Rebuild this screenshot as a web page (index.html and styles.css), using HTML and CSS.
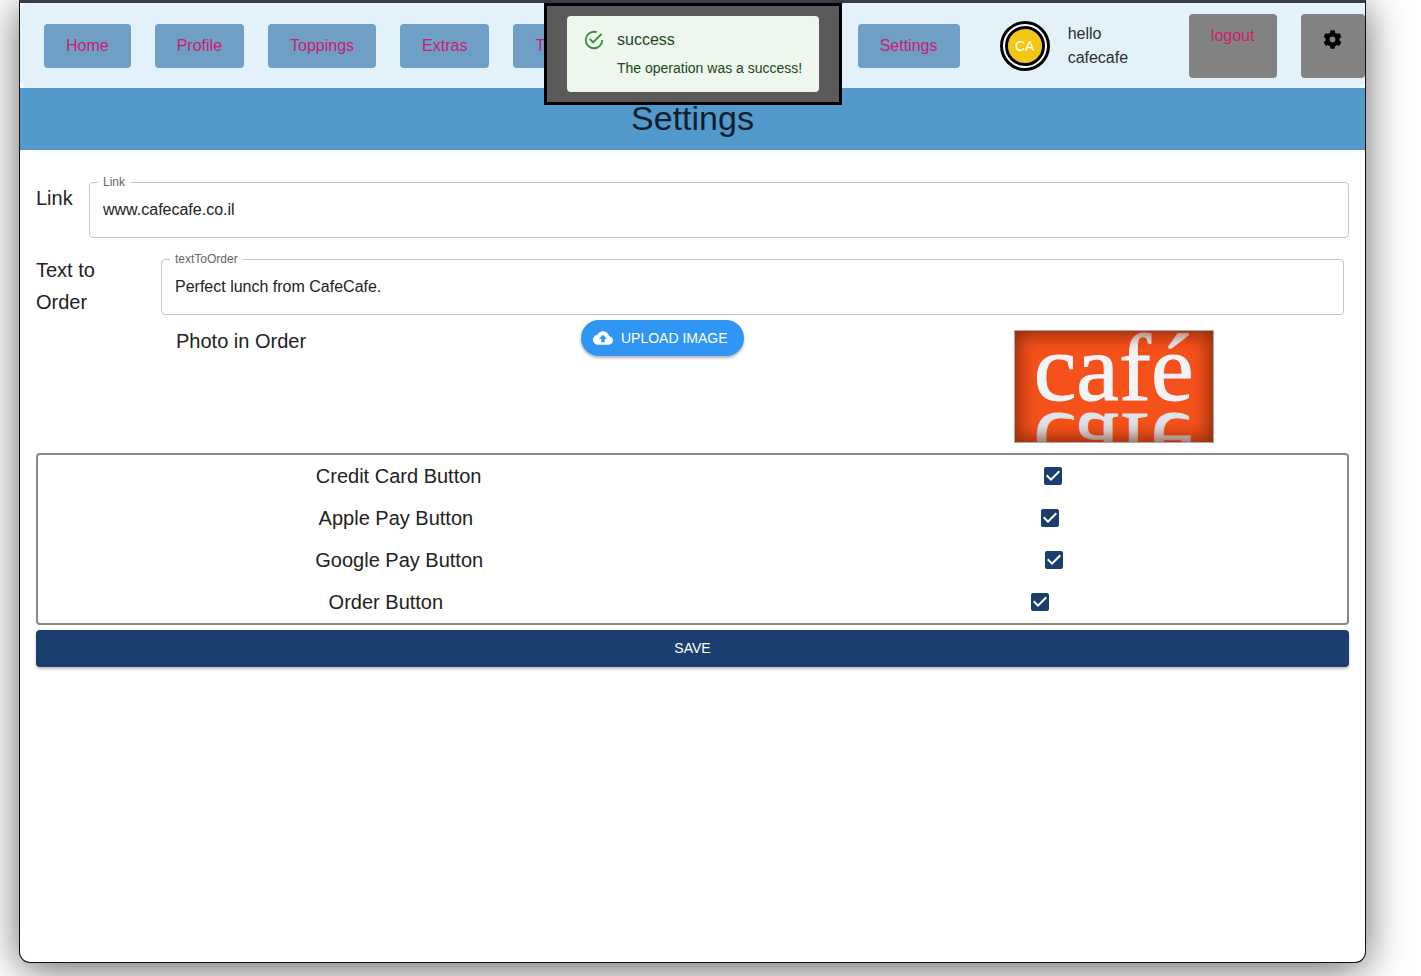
FILE: index.html
```html
<!DOCTYPE HTML>
<html>

<head>
  <meta charset="utf-8">
  <title>Settings</title>
  <link rel="stylesheet" href="styles.css">
</head>

<body>
  <div class="window">
    <nav class="nav">
      <a class="nav-btn" href="#">Home</a>
      <a class="nav-btn" href="#">Profile</a>
      <a class="nav-btn" href="#">Toppings</a>
      <a class="nav-btn" href="#">Extras</a>
      <a class="nav-btn" href="#">Tables</a>
      <a class="nav-btn" href="#">Orders</a>
      <a class="nav-btn" href="#">Menu</a>
      <a class="nav-btn nav-settings" href="#">Settings</a>
      <div class="avatar">
        <div class="avatar-in">CA</div>
      </div>
      <div class="hello">hello<br>cafecafe</div>
      <a class="grey-btn logout" href="#">logout</a>
      <a class="grey-btn gear" href="#">
        <svg width="19" height="19" viewBox="0 0 512 512">
          <path fill-rule="evenodd" d="M487 316l-42-25c4-23 4-47 0-70l42-25c5-3 7-9 6-14-11-35-30-67-54-93-4-4-10-5-15-2l-42 24c-18-15-38-27-61-35V28c0-6-4-10-9-12-36-8-73-8-108 0-6 2-10 6-10 12v48c-22 8-43 20-61 35L91 87c-5-3-11-2-15 2-24 26-43 58-54 93-1 5 1 11 6 14l42 25c-4 23-4 47 0 70l-42 25c-5 3-7 9-6 14 11 35 30 67 54 93 4 4 10 5 15 2l42-24c18 15 38 27 61 35v48c0 6 4 10 10 12 35 8 72 8 108 0 5-2 9-6 9-12v-48c23-8 43-20 61-35l42 24c5 3 11 2 15-2 24-26 43-58 54-93 1-5-1-11-6-14zM256 336c-44 0-80-36-80-80s36-80 80-80 80 36 80 80-36 80-80 80z" />
        </svg>
      </a>
    </nav>

    <div class="toast">
      <div class="alert">
        <svg class="alert-icon" width="22" height="22" viewBox="0 0 24 24">
          <path d="M20 12a8 8 0 0 1-8 8 8 8 0 0 1-8-8 8 8 0 0 1 8-8c.76 0 1.5.11 2.2.31l1.57-1.57A9.8 9.8 0 0 0 12 2 10 10 0 0 0 2 12a10 10 0 0 0 10 10 10 10 0 0 0 10-10M7.91 10.08 6.5 11.5 11 16 21 6l-1.41-1.42L11 13.17l-3.09-3.09z" />
        </svg>
        <div class="alert-text">
          <div class="alert-title">success</div>
          <div class="alert-msg">The operation was a success!</div>
        </div>
      </div>
    </div>

    <h1 class="title">Settings</h1>

    <div class="content">
      <div class="row row-link">
        <div class="row-label">Link</div>
        <fieldset class="field">
          <legend>Link</legend>
          <input class="field-input" type="text" value="www.cafecafe.co.il">
        </fieldset>
      </div>

      <div class="row row-text">
        <div class="row-label">Text to Order</div>
        <fieldset class="field">
          <legend>textToOrder</legend>
          <input class="field-input" type="text" value="Perfect lunch from CafeCafe.">
        </fieldset>
      </div>

      <div class="photo">
        <div class="photo-label">Photo in Order</div>
        <button class="upload" type="button">
          <svg width="20" height="20" viewBox="0 0 24 24">
            <path d="M19.35 10.04C18.67 6.59 15.64 4 12 4 9.11 4 6.6 5.64 5.35 8.04 2.34 8.36 0 10.91 0 14c0 3.31 2.69 6 6 6h13c2.76 0 5-2.24 5-5 0-2.64-2.05-4.78-4.65-4.96zM14 13v4h-4v-4H7l5-5 5 5h-3z" />
          </svg>
          Upload image
        </button>
        <div class="cafe">
          <div class="cafe-word">café</div>
          <div class="cafe-word cafe-flip">café</div>
        </div>
      </div>

      <div class="checks">
        <div class="check-row">
          <span>Credit Card Button</span>
          <span class="check"><svg width="24" height="24" viewBox="0 0 24 24"><path d="M19 3H5c-1.11 0-2 .9-2 2v14c0 1.1.89 2 2 2h14c1.11 0 2-.9 2-2V5c0-1.1-.89-2-2-2zm-9 14l-5-5 1.41-1.41L10 14.17l7.59-7.59L19 8l-9 9z" /></svg></span>
        </div>
        <div class="check-row">
          <span>Apple Pay Button</span>
          <span class="check"><svg width="24" height="24" viewBox="0 0 24 24"><path d="M19 3H5c-1.11 0-2 .9-2 2v14c0 1.1.89 2 2 2h14c1.11 0 2-.9 2-2V5c0-1.1-.89-2-2-2zm-9 14l-5-5 1.41-1.41L10 14.17l7.59-7.59L19 8l-9 9z" /></svg></span>
        </div>
        <div class="check-row">
          <span>Google Pay Button</span>
          <span class="check"><svg width="24" height="24" viewBox="0 0 24 24"><path d="M19 3H5c-1.11 0-2 .9-2 2v14c0 1.1.89 2 2 2h14c1.11 0 2-.9 2-2V5c0-1.1-.89-2-2-2zm-9 14l-5-5 1.41-1.41L10 14.17l7.59-7.59L19 8l-9 9z" /></svg></span>
        </div>
        <div class="check-row">
          <span>Order Button</span>
          <span class="check"><svg width="24" height="24" viewBox="0 0 24 24"><path d="M19 3H5c-1.11 0-2 .9-2 2v14c0 1.1.89 2 2 2h14c1.11 0 2-.9 2-2V5c0-1.1-.89-2-2-2zm-9 14l-5-5 1.41-1.41L10 14.17l7.59-7.59L19 8l-9 9z" /></svg></span>
        </div>
      </div>

      <button class="save" type="button">Save</button>
    </div>
  </div>
</body>

</html>
```

FILE: styles.css
```css
* {
  margin: 0;
  padding: 0;
  box-sizing: border-box;
}

html,
body {
  height: 976px;
  overflow: hidden;
}

body {
  background: #fff;
  font-family: "Liberation Sans", Arial, sans-serif;
  color: #222;
}

.window {
  position: relative;
  width: 1347px;
  height: 963px;
  margin-left: 19px;
  background: #fff;
  border: 1px solid #111;
  border-top: 3px solid #3a3c48;
  border-radius: 0 0 11px 11px;
  box-shadow: 0 6px 40px rgba(0, 0, 0, 0.6);
  overflow: hidden;
}

/* top bar */
.nav {
  display: flex;
  align-items: flex-start;
  height: 85px;
  background: #e3f1fa;
  border-radius: 8px;
}

.nav-btn {
  height: 44px;
  margin: 21px 0 0 24px;
  padding: 0 22px;
  line-height: 44px;
  font-size: 16px;
  color: #c9206e;
  background: #6f9fc4;
  border-radius: 4px;
  text-decoration: none;
}

.nav-settings {
  min-width: 102px;
  margin-left: 29px;
}

.avatar {
  width: 50px;
  height: 50px;
  margin: 18px 0 0 40px;
  padding: 2px;
  background: #fff;
  border: 3px solid #000;
  border-radius: 50%;
}

.avatar-in {
  height: 100%;
  line-height: 34px;
  text-align: center;
  font-size: 14px;
  color: #fff;
  background: #f5c614;
  border: 3px solid #000;
  border-radius: 50%;
  background-clip: padding-box;
}

.hello {
  width: 121px;
  margin: 19px 0 0 18px;
  font-size: 16px;
  line-height: 24px;
  color: #2b2f36;
}

.grey-btn {
  height: 64px;
  margin-top: 11px;
  background: #828282;
  border-radius: 4px;
  text-align: center;
  text-decoration: none;
}

.logout {
  width: 88px;
  padding-top: 12px;
  font-size: 16px;
  line-height: 20px;
  color: #c9206e;
}

.gear {
  width: 64px;
  margin-left: 24px;
  padding-top: 16px;
  color: #000;
}

/* message over the bar */
.toast {
  position: absolute;
  left: 524px;
  top: 0;
  width: 298px;
  height: 102px;
  padding: 10px 20px;
  background: #5a5a5a;
  border: 3px solid #000;
}

.alert {
  display: flex;
  width: 252px;
  height: 76px;
  padding: 13px 16px;
  background: #edf7ed;
  border-radius: 4px;
  color: #1e4620;
}

.alert-icon {
  flex: none;
  margin: 0 12px 0 0;
  fill: #388e3c;
}

.alert-title {
  font-size: 16px;
  line-height: 22px;
}

.alert-msg {
  margin-top: 7px;
  font-size: 14px;
  line-height: 20px;
  white-space: nowrap;
}

.title {
  height: 62px;
  font-size: 34px;
  font-weight: 400;
  line-height: 60px;
  text-align: center;
  color: #0e1e2d;
  background: #5299cc;
}

.content {
  padding: 32px 16px 0;
}

/* outlined inputs */
.row {
  display: flex;
  align-items: flex-start;
}

.row-label {
  font-size: 20px;
  line-height: 32px;
}

.row-link .row-label {
  width: 53px;
}

.row-text {
  margin-top: 16px;
  padding-right: 5px;
}

.row-text .row-label {
  width: 125px;
  padding-right: 20px;
}

.row-text .field {
  margin-top: -1px;
}

.field {
  flex: 1;
  height: 62px;
  margin-top: -6px;
  padding: 0 13px;
  border: 1px solid #c4c4c4;
  border-radius: 4px;
}

.field legend {
  padding: 0 5px;
  margin-left: -5px;
  font-size: 12px;
  line-height: 12px;
  color: #666;
}

.field-input {
  display: block;
  width: 100%;
  height: 44px;
  border: 0;
  outline: 0;
  font: 16px "Liberation Sans", Arial, sans-serif;
  color: #222;
  background: none;
}

/* photo row */
.photo {
  display: flex;
  align-items: flex-start;
  height: 135px;
  padding-top: 2px;
}

.photo-label {
  width: 405px;
  margin: 5px 0 0 140px;
  font-size: 20px;
  line-height: 32px;
}

.upload {
  display: flex;
  align-items: center;
  gap: 8px;
  height: 36px;
  padding: 0 16px 0 12px;
  font: 14px "Liberation Sans", Arial, sans-serif;
  text-transform: uppercase;
  color: #fff;
  background: #2f96f3;
  border: 0;
  border-radius: 18px;
  box-shadow: 0 2px 3px rgba(0, 0, 0, 0.3);
}

.upload svg {
  fill: #fff;
}

.cafe {
  position: relative;
  width: 200px;
  height: 113px;
  margin: 10px 0 0 270px;
  background: #f5511a;
  border: 1px solid #a9a9a9;
  overflow: hidden;
}

/* dark edge of the photo, over the words */
.cafe::after {
  content: "";
  position: absolute;
  left: 0;
  top: 0;
  right: 0;
  bottom: 0;
  box-shadow: inset 0 0 16px 5px rgba(110, 30, 5, 0.7);
}

.cafe-word {
  position: absolute;
  left: 0;
  top: -3px;
  width: 100%;
  height: 80px;
  text-align: center;
  font-family: "Liberation Serif", serif;
  font-size: 96px;
  line-height: 80px;
  color: #f3f4f8;
  -webkit-text-stroke: 1px #f3f4f8;
}

.cafe-flip {
  top: 75px;
  transform: scaleY(-1);
  color: #dfe3ea;
  -webkit-text-stroke: 1px #dfe3ea;
}

/* checkboxes */
.checks {
  height: 172px;
  border: 2px solid #888;
  border-radius: 4px;
}

.check-row {
  display: flex;
  justify-content: space-around;
  align-items: center;
  height: 42px;
  font-size: 20px;
}

.check {
  display: flex;
  justify-content: center;
  width: 32px;
}

.check svg {
  fill: #1a3e6d;
}

.save {
  display: block;
  width: 100%;
  height: 37px;
  margin-top: 5px;
  padding-bottom: 2px;
  font: 14px "Liberation Sans", Arial, sans-serif;
  text-transform: uppercase;
  color: #fff;
  background: #1a3e6d;
  border: 0;
  border-radius: 4px;
  box-shadow: 0 2px 3px rgba(0, 0, 0, 0.25);
}
```
